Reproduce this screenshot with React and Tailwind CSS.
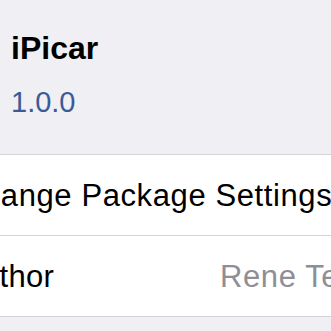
export default function App() {
  return (
    <div
      className="w-[331px] h-[331px] overflow-hidden bg-[#efeff4]"
      style={{ fontFamily: '"Liberation Sans", Arial, sans-serif' }}
    >
      {/* header */}
      <div className="pl-[11px] pt-[32px] pb-[37px]">
        <h1 className="text-[32px] leading-none font-bold text-black">iPicar</h1>
        <p className="mt-[24px] text-[29px] leading-none text-[#3a5b96]">1.0.0</p>
      </div>

      {/* rows */}
      <div className="bg-white border-t border-b border-[#d4d4d8]">
        <div className="h-[80px] flex items-center whitespace-nowrap">
          <span className="ml-[-40px] text-[31px] leading-none tracking-[0.6px] text-black">Change Package Settings</span>
        </div>
        <div className="h-[81px] flex items-center whitespace-nowrap border-t border-[#d4d4d8]">
          <span className="ml-[-39px] w-[259px] shrink-0 text-[31px] leading-none tracking-[0.3px] text-black">Author</span>
          <span className="text-[31px] leading-none tracking-[0.6px] text-[#8e8e96]">Rene Tegeler</span>
        </div>
      </div>
    </div>
  );
}
